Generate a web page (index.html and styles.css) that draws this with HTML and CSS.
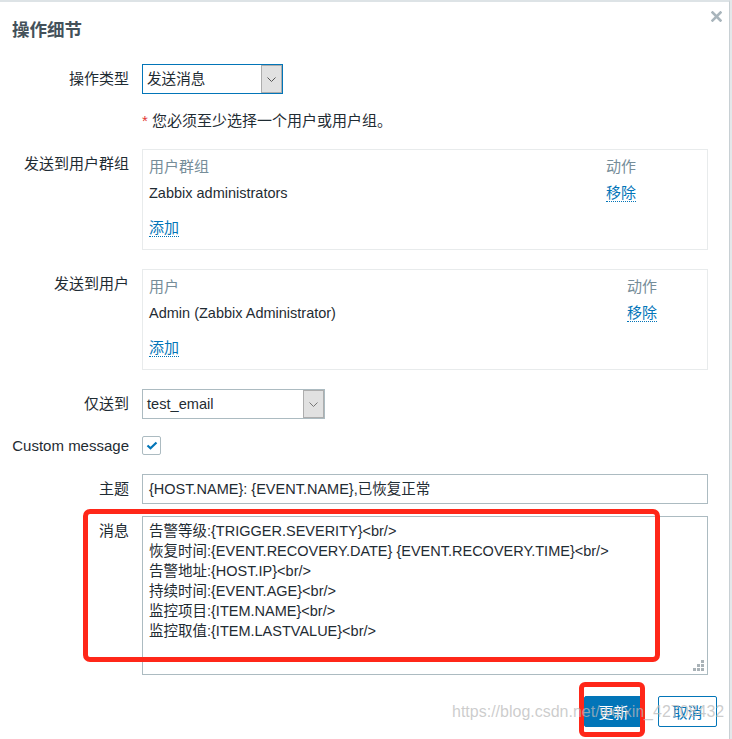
FILE: index.html
```html
<!DOCTYPE html>
<html lang="zh-CN">
<head>
<meta charset="utf-8">
<title>操作细节</title>
<link rel="stylesheet" href="styles.css">
</head>
<body>
<div class="dialog">
  <h2 class="title">操作细节</h2>
  <button class="close" type="button" aria-label="close">
    <svg width="11" height="11" viewBox="0 0 11 11"><path d="M1.5 1.5 L9.5 9.5 M9.5 1.5 L1.5 9.5" stroke="#a9b5bc" stroke-width="2.6" stroke-linecap="square"/></svg>
  </button>

  <div class="form">
    <div class="row row-type">
      <div class="label">操作类型</div>
      <div class="field">
        <div class="select select-focus select-type">
          <span class="select-text">发送消息</span>
          <span class="select-btn"><svg width="9" height="5" viewBox="0 0 9 5"><path d="M0.5 0.5 L4.5 4.5 L8.5 0.5" fill="none" stroke="#555" stroke-width="1"/></svg></span>
        </div>
      </div>
    </div>

    <div class="row row-warn">
      <div class="label"></div>
      <div class="field warn"><span class="req">*</span> 您必须至少选择一个用户或用户组。</div>
    </div>

    <div class="row row-box">
      <div class="label">发送到用户群组</div>
      <div class="field">
        <div class="box box-groups">
          <div class="box-grid">
            <div class="th">用户群组</div><div class="th">动作</div>
            <div class="td">Zabbix administrators</div><div class="td"><a class="link">移除</a></div>
          </div>
          <div class="add"><a class="link">添加</a></div>
        </div>
      </div>
    </div>

    <div class="row row-box">
      <div class="label">发送到用户</div>
      <div class="field">
        <div class="box box-users">
          <div class="box-grid">
            <div class="th">用户</div><div class="th">动作</div>
            <div class="td">Admin (Zabbix Administrator)</div><div class="td"><a class="link">移除</a></div>
          </div>
          <div class="add"><a class="link">添加</a></div>
        </div>
      </div>
    </div>

    <div class="row row-box">
      <div class="label">仅送到</div>
      <div class="field">
        <div class="select select-media">
          <span class="select-text">test_email</span>
          <span class="select-btn"><svg width="9" height="5" viewBox="0 0 9 5"><path d="M0.5 0.5 L4.5 4.5 L8.5 0.5" fill="none" stroke="#777" stroke-width="1"/></svg></span>
        </div>
      </div>
    </div>

    <div class="row row-check">
      <div class="label label-check">Custom message</div>
      <div class="field">
        <span class="checkbox"><svg width="12" height="9" viewBox="0 0 12 9"><path d="M1.5 4.5 L4.5 7.3 L10.5 1.5" fill="none" stroke="#0275b8" stroke-width="2.2"/></svg></span>
      </div>
    </div>

    <div class="row row-subject">
      <div class="label">主题</div>
      <div class="field">
        <div class="input">{HOST.NAME}: {EVENT.NAME},已恢复正常</div>
      </div>
    </div>

    <div class="row row-msg">
      <div class="label">消息</div>
      <div class="field">
        <div class="textarea">
          <div>告警等级:{TRIGGER.SEVERITY}&lt;br/&gt;</div>
          <div>恢复时间:{EVENT.RECOVERY.DATE} {EVENT.RECOVERY.TIME}&lt;br/&gt;</div>
          <div>告警地址:{HOST.IP}&lt;br/&gt;</div>
          <div>持续时间:{EVENT.AGE}&lt;br/&gt;</div>
          <div>监控项目:{ITEM.NAME}&lt;br/&gt;</div>
          <div>监控取值:{ITEM.LASTVALUE}&lt;br/&gt;</div>
          <svg class="grip" width="11" height="11" viewBox="0 0 11 11"><g fill="#a9b2b7"><rect x="8" y="0" width="3" height="3"/><rect x="4" y="4" width="3" height="3"/><rect x="8" y="4" width="3" height="3"/><rect x="0" y="8" width="3" height="3"/><rect x="4" y="8" width="3" height="3"/><rect x="8" y="8" width="3" height="3"/></g></svg>
        </div>
      </div>
    </div>
  </div>

  <div class="footer">
    <button class="btn btn-primary" type="button">更新</button>
    <button class="btn btn-alt" type="button">取消</button>
  </div>
</div>

<div class="mark mark-msg"></div>
<div class="mark mark-btn"></div>
<div class="watermark">https://blog.csdn.net/weixin_42708432</div>
</body>
</html>
```

FILE: styles.css
```css
html, body {
  margin: 0;
  padding: 0;
}

body {
  background: #e4e8ea;
  font-family: "Liberation Sans", Arial, "Noto Sans CJK SC", sans-serif;
  font-size: 15px;
  color: #1f2c33;
  width: 732px;
  height: 739px;
  overflow: hidden;
  position: relative;
}

.dialog {
  position: relative;
  width: 717px;
  min-height: 737px;
  background: #ffffff;
  border-top: 2px solid #dde3e6;
  border-right: 1px solid #c8d0d4;
  padding: 0 0 0 12px;
}

.title {
  margin: 0;
  padding-top: 16px;
  line-height: 24px;
  font-size: 17.5px;
  font-weight: bold;
  color: #44515a;
}

.close {
  position: absolute;
  top: 9px;
  right: 7px;
  width: 11px;
  height: 11px;
  padding: 0;
  border: 0;
  background: none;
  display: block;
}
.close svg { display: block; }

.form {
  margin-top: 22px;
  display: flex;
  flex-direction: column;
}

.row {
  display: grid;
  grid-template-columns: 117px 566px;
  column-gap: 13px;
  align-items: start;
}

.label {
  text-align: right;
  line-height: 30px;
  white-space: nowrap;
}

.row-warn { margin-top: 18px; }
.row-warn .label { line-height: 18px; }
.warn { line-height: 18px; }
.req { color: #e33734; }

.row-box { margin-top: 19px; }
.row-check { margin-top: 17px; }
.row-check .label { line-height: 19px; }
.row-subject { margin-top: 19px; }
.row-msg { margin-top: 12px; }

/* select */
.select {
  box-sizing: border-box;
  height: 30px;
  border: 1px solid #acbbc1;
  display: flex;
  align-items: stretch;
  background: #fff;
}
.select-focus { border-color: #0275b8; }
.select-type { width: 141px; }
.select-media { width: 183px; }
.select-text {
  flex: 1;
  padding-left: 4px;
  line-height: 28px;
  font-size: 14.6px;
  white-space: nowrap;
}
.select-btn {
  width: 21px;
  box-sizing: border-box;
  background: #e1e1e1;
  border: 1px solid #adadad;
  display: flex;
  align-items: center;
  justify-content: center;
}

/* user boxes */
.box {
  box-sizing: border-box;
  height: 101px;
  border: 1px solid #e8ebec;
  padding: 8px 6px 12px 6px;
}
.box-grid {
  display: grid;
  row-gap: 8px;
  line-height: 18px;
}
.box-groups .box-grid { grid-template-columns: 1fr 95px; }
.box-users .box-grid { grid-template-columns: 1fr 74px; }
.th { color: #768d99; }
.td { font-size: 14.5px; }
.add {
  margin-top: 17px;
  line-height: 18px;
}
.link {
  color: #0275b8;
  border-bottom: 1px dotted #0275b8;
  text-decoration: none;
  font-size: 15px;
  cursor: pointer;
}

/* checkbox */
.checkbox {
  box-sizing: border-box;
  width: 19px;
  height: 19px;
  border: 1px solid #acbbc1;
  border-radius: 2px;
  display: flex;
  align-items: center;
  justify-content: center;
  background: #fff;
}

/* subject input */
.input {
  box-sizing: border-box;
  height: 30px;
  border: 1px solid #acbbc1;
  padding-left: 6px;
  line-height: 28px;
  font-size: 14.5px;
  white-space: nowrap;
}

/* textarea */
.textarea {
  position: relative;
  box-sizing: border-box;
  height: 159px;
  border: 1px solid #acbbc1;
  padding: 4px 6px;
  line-height: 20px;
  font-size: 14.5px;
  white-space: nowrap;
}
.grip {
  position: absolute;
  right: 3px;
  bottom: 3px;
}

/* footer */
.footer {
  margin-top: 21px;
  display: flex;
  justify-content: flex-end;
  gap: 15px;
  padding-right: 12px;
}
.btn {
  box-sizing: border-box;
  width: 59px;
  height: 31px;
  padding: 0;
  font-family: "Liberation Sans", Arial, "Noto Sans CJK SC", sans-serif;
  font-size: 15px;
  border-radius: 2px;
  border: 1px solid #0275b8;
}
.btn-primary {
  background: #0275b8;
  color: #ffffff;
}
.btn-alt {
  background: #ffffff;
  color: #0275b8;
}

/* red annotation overlays */
.mark {
  position: absolute;
  box-sizing: border-box;
  border: 5px solid #ff2719;
  border-radius: 7px;
}
.mark-msg {
  left: 83px;
  top: 509px;
  width: 577px;
  height: 153px;
}
.mark-btn {
  left: 579px;
  top: 682px;
  width: 66px;
  height: 55px;
  border-radius: 6px;
}

.watermark {
  position: absolute;
  left: 452px;
  top: 702px;
  font-size: 16px;
  line-height: 20px;
  color: rgba(185, 185, 185, 0.72);
  white-space: nowrap;
  pointer-events: none;
}
```
